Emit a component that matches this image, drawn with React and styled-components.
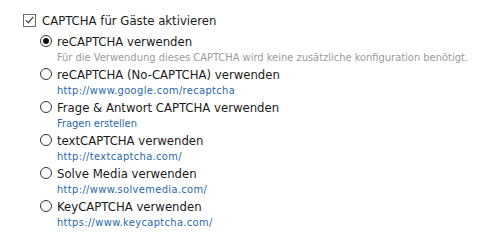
import React, { useState } from "react";
import styled, { createGlobalStyle } from "styled-components";

const GlobalStyle = createGlobalStyle`
  body {
    margin: 0;
    background: #fff;
    font-family: "DejaVu Sans Condensed", "DejaVu Sans", Verdana, sans-serif;
    color: #1a1a1a;
  }
`;

const Panel = styled.div`
  padding: 11px 0 0 23px;
`;

const MainRow = styled.label`
  display: flex;
  align-items: center;
  height: 18px;
  gap: 6px;
  font-size: 13px;
  cursor: pointer;
`;

const CheckBox = styled.span`
  width: 11px;
  height: 11px;
  border: 1px solid #6b6b6b;
  display: flex;
  align-items: center;
  justify-content: center;
  flex-shrink: 0;
`;

const Options = styled.div`
  padding: 3px 0 0 17px;
`;

const Option = styled.div`
  height: 33px;
`;

const OptionRow = styled.label`
  display: flex;
  align-items: center;
  height: 18px;
  gap: 5px;
  font-size: 13px;
  cursor: pointer;
`;

const Radio = styled.span`
  width: 10px;
  height: 10px;
  border: 1px solid #333;
  border-radius: 50%;
  display: flex;
  align-items: center;
  justify-content: center;
  flex-shrink: 0;

  &::after {
    content: "";
    width: 6px;
    height: 6px;
    border-radius: 50%;
    background: ${(p) => (p.$checked ? "#111" : "transparent")};
  }
`;

const Sub = styled.div`
  margin-top: 1px;
  padding-left: 17px;
  height: 14px;
  line-height: 14px;
  font-size: 11px;
  white-space: nowrap;
  color: ${(p) => (p.$muted ? "#9a9a9a" : "#2868ab")};
  letter-spacing: ${(p) => (p.$link ? "0.35px" : "0")};
`;

const options = [
  {
    id: "recaptcha",
    label: "reCAPTCHA verwenden",
    sub: "Für die Verwendung dieses CAPTCHA wird keine zusätzliche konfiguration benötigt.",
    muted: true,
  },
  { id: "nocaptcha", label: "reCAPTCHA (No-CAPTCHA) verwenden", sub: "http://www.google.com/recaptcha", link: true },
  { id: "qa", label: "Frage & Antwort CAPTCHA verwenden", sub: "Fragen erstellen" },
  { id: "text", label: "textCAPTCHA verwenden", sub: "http://textcaptcha.com/", link: true },
  { id: "solve", label: "Solve Media verwenden", sub: "http://www.solvemedia.com/", link: true },
  { id: "key", label: "KeyCAPTCHA verwenden", sub: "https://www.keycaptcha.com/", link: true },
];

export default function App() {
  const [active, setActive] = useState("recaptcha");

  return (
    <>
      <GlobalStyle />
      <Panel>
        <MainRow>
          <CheckBox>
            <svg width="9" height="8" viewBox="0 0 9 8">
              <path d="M0.8 4.2 L3.3 6.6 L8.3 0.9" fill="none" stroke="#333" strokeWidth="1.1" />
            </svg>
          </CheckBox>
          CAPTCHA für Gäste aktivieren
        </MainRow>
        <Options>
          {options.map((o) => (
            <Option key={o.id}>
              <OptionRow onClick={() => setActive(o.id)}>
                <Radio $checked={active === o.id} />
                {o.label}
              </OptionRow>
              <Sub $muted={o.muted} $link={o.link}>{o.sub}</Sub>
            </Option>
          ))}
        </Options>
      </Panel>
    </>
  );
}
